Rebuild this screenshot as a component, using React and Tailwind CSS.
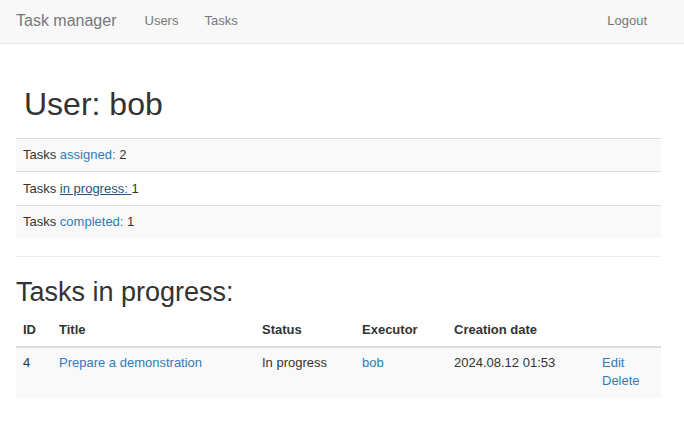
import React from 'react'

const stats = [
  { label: 'assigned:', value: 2, active: false },
  { label: 'in progress: ', value: 1, active: true },
  { label: 'completed:', value: 1, active: false },
]

const tasks = [
  { id: 4, title: 'Prepare a demonstration', status: 'In progress', executor: 'bob', created: '2024.08.12 01:53' },
]

export default function App() {
  return (
    <div className="min-h-[426px] bg-white text-[13px] leading-[18px] text-[#333]" style={{ fontFamily: '"Liberation Sans", Arial, sans-serif' }}>
      {/* Navbar */}
      <nav className="flex h-[44px] items-center border-b border-[#e7e7e7] bg-[#f8f8f8] pb-[2px] text-[#777]">
        <a className="ml-4 text-[16px]">Task manager</a>
        <a className="ml-[28px]">Users</a>
        <a className="ml-[26px]">Tasks</a>
        <a className="ml-auto mr-[37px]">Logout</a>
      </nav>

      <div className="pl-4 pr-[23px]">
        <h1 className="mt-[42px] pl-2 text-[32px] leading-[36px] font-normal">User: bob</h1>

        {/* Stats */}
        <table className="mt-4 w-full border-collapse">
          <tbody>
            {stats.map((s, i) => (
              <tr key={s.label} className={i % 2 === 0 ? 'bg-[#f9f9f9]' : ''}>
                <td className="border-t border-[#ddd] px-[7px] py-[7.2px]">
                  Tasks{' '}
                  <a className={s.active ? 'text-[#23527c] underline' : 'text-[#337ab7]'}>{s.label}</a>{' '}
                  {s.value}
                </td>
              </tr>
            ))}
          </tbody>
        </table>

        <hr className="mt-[18px] border-t border-[#eee]" />

        <h2 className="mt-[20px] mb-[7px] text-[27px] leading-[30px] font-normal">Tasks in progress:</h2>

        {/* Tasks table */}
        <table className="w-full table-fixed border-collapse">
          <colgroup>
            <col className="w-[36px]" />
            <col className="w-[203px]" />
            <col className="w-[100px]" />
            <col className="w-[92px]" />
            <col className="w-[148px]" />
            <col />
          </colgroup>
          <thead>
            <tr className="text-left">
              <th className="border-b-2 border-[#ddd] p-[7px] font-bold">ID</th>
              <th className="border-b-2 border-[#ddd] p-[7px] font-bold">Title</th>
              <th className="border-b-2 border-[#ddd] p-[7px] font-bold">Status</th>
              <th className="border-b-2 border-[#ddd] p-[7px] font-bold">Executor</th>
              <th className="border-b-2 border-[#ddd] p-[7px] font-bold">Creation date</th>
              <th className="border-b-2 border-[#ddd] p-[7px]"></th>
            </tr>
          </thead>
          <tbody>
            {tasks.map((t) => (
              <tr key={t.id} className="bg-[#f9f9f9] align-top">
                <td className="px-[7px] pt-[6px] pb-[8px]">{t.id}</td>
                <td className="px-[7px] pt-[6px] pb-[8px]"><a className="text-[#337ab7]">{t.title}</a></td>
                <td className="px-[7px] pt-[6px] pb-[8px]">{t.status}</td>
                <td className="px-[7px] pt-[6px] pb-[8px]"><a className="text-[#337ab7]">{t.executor}</a></td>
                <td className="px-[7px] pt-[6px] pb-[8px]">{t.created}</td>
                <td className="px-[7px] pt-[6px] pb-[8px]">
                  <a className="block text-[#337ab7]">Edit</a>
                  <a className="block text-[#337ab7]">Delete</a>
                </td>
              </tr>
            ))}
          </tbody>
        </table>
      </div>
    </div>
  )
}
